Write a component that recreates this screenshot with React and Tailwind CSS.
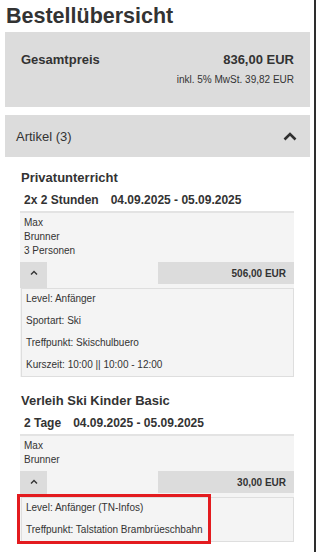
import React from "react";

const font = { fontFamily: '"Liberation Sans", Arial, sans-serif' };

function BigChevron() {
  return (
    <svg width="14" height="9" viewBox="0 0 14 9" className="block">
      <polyline points="1.5,7.5 7,2 12.5,7.5" fill="none" stroke="#2f2f2f" strokeWidth="2.6" strokeLinecap="butt" strokeLinejoin="miter" />
    </svg>
  );
}

function SmallChevron() {
  return (
    <svg width="8" height="5" viewBox="0 0 8 5" className="block">
      <polyline points="1,4.5 4,1.5 7,4.5" fill="none" stroke="#333" strokeWidth="1.4" />
    </svg>
  );
}

function Item({ title, qty, date, names, price, details, highlight, titleMt }) {
  return (
    <div>
      <div className={`${titleMt} pl-[1px] text-[13px] leading-[16px] font-bold text-[#333]`}>{title}</div>
      <div className="mt-[6px] pl-[4px] text-[12px] leading-[16px] font-bold text-[#333] flex">
        <span>{qty}</span>
        <span className="ml-[12px]">{date}</span>
      </div>
      <div className="mt-[3px] border-t-2 border-[#e3e3e3] bg-[#f4f4f4]">
        <div className="pt-[3px] pl-[4px] text-[10px] leading-[14px] text-[#333]">
          {names.map((n) => (
            <div key={n}>{n}</div>
          ))}
        </div>
        <div className="mt-[4px] flex items-start justify-between">
          <div className="w-[27px] h-[26px] bg-[#dcdcdc] flex justify-center pt-[8px]">
            <SmallChevron />
          </div>
          <div className="w-[136px] h-[22px] bg-[#dcdcdc] flex items-center justify-end pr-[8px] text-[10px] font-bold text-[#333]">
            {price}
          </div>
        </div>
        <div className="relative ml-[1px] border border-[#dedede] bg-[#f4f4f4] pl-[4px] pt-[3px] pb-[4px] flex flex-col gap-[8px] text-[10px] leading-[14px] text-[#333]">
          {details.map((d) => (
            <div key={d}>{d}</div>
          ))}
          {highlight && (
            <div className="absolute left-[-5px] top-[-4px] w-[194px] h-[50px] border-[3px] border-[#e31b1f]" />
          )}
        </div>
      </div>
    </div>
  );
}

export default function App() {
  return (
    <div style={font} className="w-[316px] h-[552px] overflow-hidden bg-white border-r-2 border-[#2e2e2e] pl-[5px] pr-[4px] text-[#333]">
      <div className="pt-[4px] pl-[1px] text-[21.5px] leading-[24px] font-bold text-[#333]">Bestellübersicht</div>

      <div className="mt-[4px] bg-[#dcdcdc] pt-[20px] pb-[20px] pl-[16px] pr-[16px]">
        <div className="flex justify-between text-[13px] leading-[16px] font-bold">
          <span>Gesamtpreis</span>
          <span>836,00 EUR</span>
        </div>
        <div className="mt-[5px] text-right text-[10px] leading-[14px]">inkl. 5% MwSt. 39,82 EUR</div>
      </div>

      <div className="mt-[8px] h-[42px] bg-[#dcdcdc] flex items-center justify-between pl-[11px] pr-[13px]">
        <span className="text-[13px] leading-[16px] pt-[2px]">Artikel (3)</span>
        <BigChevron />
      </div>

      <div className="pl-[15px] pr-[16px]">
        <Item
          titleMt="mt-[13px]"
          title="Privatunterricht"
          qty="2x 2 Stunden"
          date="04.09.2025 - 05.09.2025"
          names={["Max", "Brunner", "3 Personen"]}
          price="506,00 EUR"
          details={["Level: Anfänger", "Sportart: Ski", "Treffpunkt: Skischulbuero", "Kurszeit: 10:00 || 10:00 - 12:00"]}
        />
        <Item
          titleMt="mt-[16px]"
          title="Verleih Ski Kinder Basic"
          qty="2 Tage"
          date="04.09.2025 - 05.09.2025"
          names={["Max", "Brunner"]}
          price="30,00 EUR"
          details={["Level: Anfänger (TN-Infos)", "Treffpunkt: Talstation Brambrüeschbahn"]}
          highlight
        />
      </div>
    </div>
  );
}
